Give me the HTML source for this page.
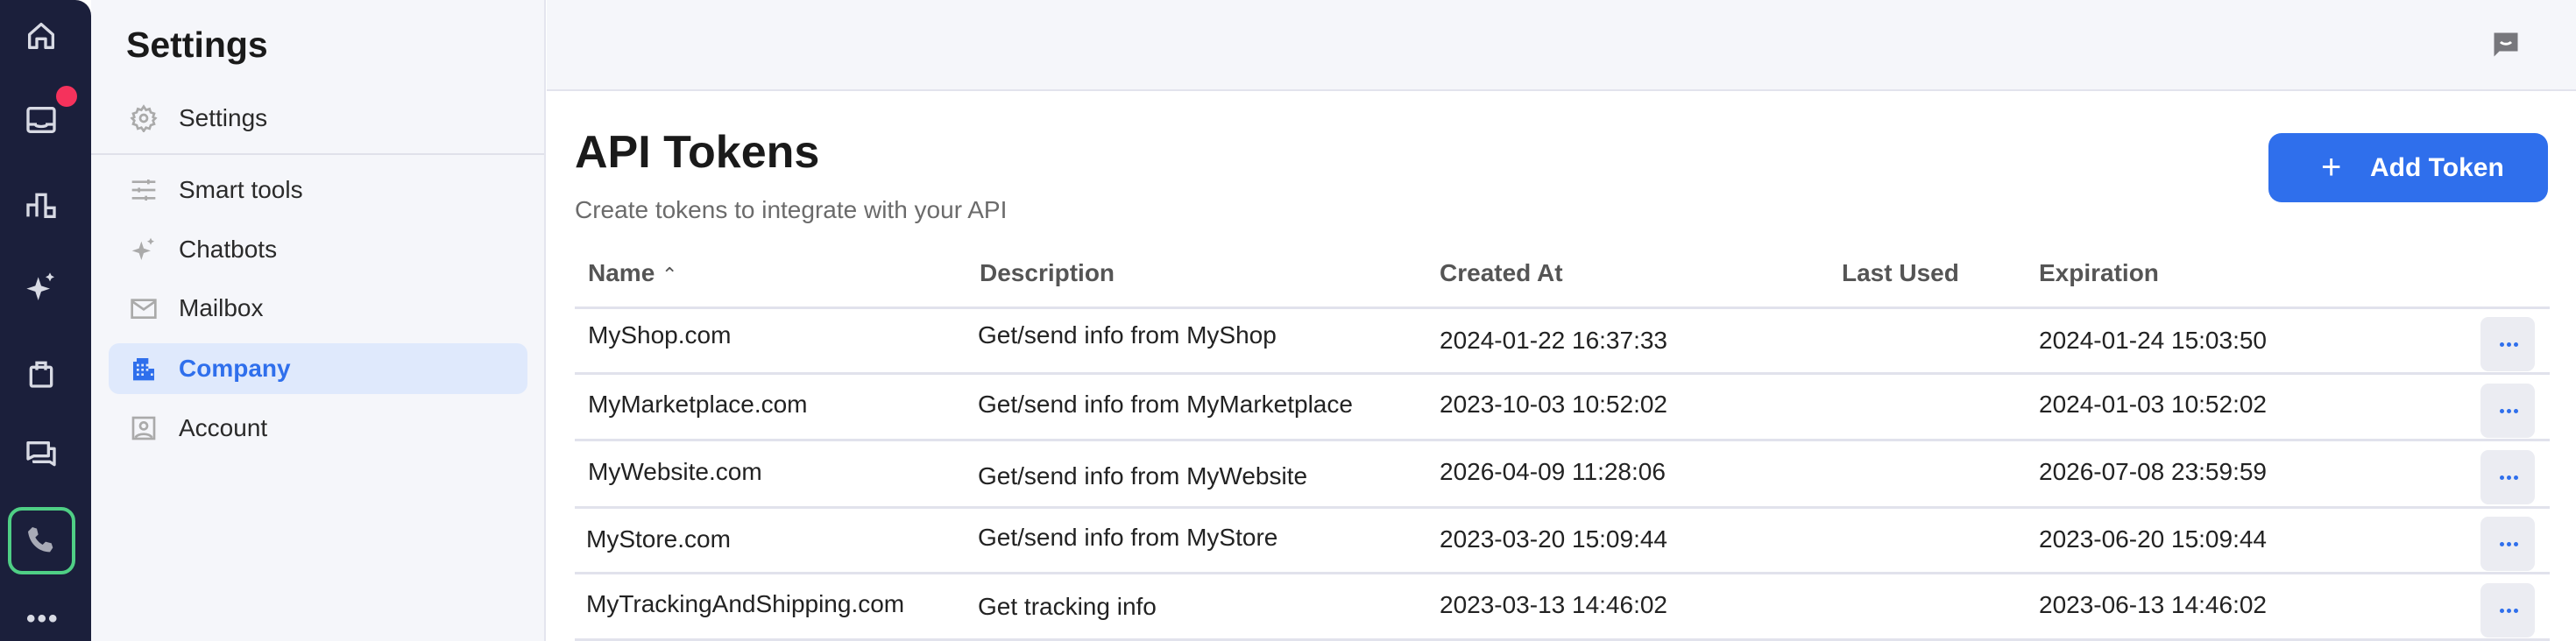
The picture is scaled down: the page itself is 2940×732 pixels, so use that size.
<!DOCTYPE html>
<html><head><meta charset="utf-8"><style>
*{margin:0;padding:0;box-sizing:border-box}
body{width:2940px;height:732px;overflow:hidden;background:#fff;font-family:"Liberation Sans",sans-serif;position:relative}
.side{position:absolute;left:0;top:0;width:104px;height:732px;background:#1b1f3b;border-top-right-radius:18px}
.side svg{position:absolute;left:27px;width:40px;height:40px}
.set{position:absolute;left:104px;top:0;width:519px;height:732px;background:#f5f6fa;border-right:2px solid #e4e5ee}
.set h1{position:absolute;left:40px;top:28px;font-size:41px;font-weight:bold;color:#1a1a1a}
.item{position:absolute;left:0;width:519px;height:58px;font-size:28px;color:#2a2a2a;line-height:58px}
.item span{position:absolute;left:100px}
.item svg{position:absolute;left:44px;top:13px;width:32px;height:32px}
.main{position:absolute;left:624px;top:0;right:0;height:104px;background:#f5f6fa;border-bottom:2px solid #e2e3ed}
h2{position:absolute;left:656px;top:144px;font-size:52px;font-weight:bold;color:#1a1a1a}
.sub{position:absolute;left:656px;top:224px;font-size:28px;color:#6b6b6b}
.btn{position:absolute;left:2589px;top:152px;width:319px;height:79px;background:#2f6fec;border-radius:15px;color:#fff;font-size:30px;font-weight:bold;line-height:79px}
.th{position:absolute;top:296px;font-size:28px;font-weight:bold;color:#555}
.line{position:absolute;left:656px;width:2254px;height:3px;background:#e1e2ec}
.td{position:absolute;font-size:28px;color:#222}
.dots{position:absolute;left:2831px;width:62px;height:62px;background:#ebecf2;border-radius:9px}
.dots::after{content:"";position:absolute;left:22px;top:29px;width:5px;height:5px;border-radius:50%;background:#2f6fec;box-shadow:8px 0 #2f6fec,16px 0 #2f6fec}
</style></head><body>
<div class="side">
<svg style="top:21px" viewBox="0 0 24 24" fill="none" stroke="#d8dae4" stroke-width="2" stroke-linejoin="round"><path d="M4 11l8-7 8 7v9h-5v-6h-6v6H4z"/></svg>
<svg style="top:117px" viewBox="0 0 24 24" fill="none" stroke="#d8dae4" stroke-width="2"><rect x="3" y="4" width="18" height="16" rx="1.5"/><path d="M3 15h5c0 2 8 2 8 0h5"/></svg>
<div style="position:absolute;left:64px;top:98px;width:24px;height:24px;border-radius:50%;background:#f5325c"></div>
<svg style="top:214px" viewBox="0 0 24 24" fill="none" stroke="#d8dae4" stroke-width="2"><path d="M3 20V12h6v8M9 20V5h6v15M15 20v-6h6v6z"/></svg>
<svg style="top:308px" viewBox="0 0 24 24" fill="#d8dae4"><path d="M10 5l2 6 6 2-6 2-2 6-2-6-6-2 6-2zM18 2l1 2 2 1-2 1-1 2-1-2-2-1 2-1z"/></svg>
<svg style="top:406px" viewBox="0 0 24 24" fill="none" stroke="#d8dae4" stroke-width="2"><rect x="5" y="8" width="14" height="13" rx="1"/><path d="M9 10V5h6v5"/></svg>
<svg style="top:499px" viewBox="0 0 24 24" fill="none" stroke="#d8dae4" stroke-width="2" stroke-linejoin="round"><path d="M3 4h14v9H7l-4 2zM7 16v1h11l3 2V8h-4"/></svg>
<div style="position:absolute;left:9px;top:579px;width:77px;height:77px;border:4px solid #4fcf85;border-radius:16px"></div>
<svg style="top:597px" viewBox="0 0 24 24" fill="#a8aab6"><path d="M6 3l3 1 1 4-2 2c1 2 3 4 5 5l2-2 4 1 1 3-2 3C10 20 4 14 3 6z"/></svg>
<div style="position:absolute;left:30px;top:690px;color:#d8dae4;font-size:30px;letter-spacing:2px;font-weight:bold">•••</div>
</div>
<div class="set">
<h1>Settings</h1>
<div class="item" style="top:106px"><svg viewBox="0 0 24 24" fill="none" stroke="#aaa" stroke-width="2"><circle cx="12" cy="12" r="3"/><path d="M12 2l2 3 3-1 1 3 3 1-1 3 2 1-2 2 1 3-3 1-1 3-3-1-2 3-2-3-3 1-1-3-3-1 1-3-2-2 2-1-1-3 3-1 1-3 3 1z"/></svg><span>Settings</span></div>
<div style="position:absolute;left:0;top:175px;width:517px;height:2px;background:#e0e1ea"></div>
<div class="item" style="top:188px"><svg viewBox="0 0 24 24" fill="none" stroke="#aaa" stroke-width="2"><path d="M2 5h20M2 12h20M2 19h20M16 3v4M8 10v4M14 17v4"/></svg><span>Smart tools</span></div>
<div class="item" style="top:256px"><svg viewBox="0 0 24 24" fill="#aaa"><path d="M10 5l2 6 6 2-6 2-2 6-2-6-6-2 6-2zM18 2l1 2 2 1-2 1-1 2-1-2-2-1 2-1z"/></svg><span>Chatbots</span></div>
<div class="item" style="top:323px"><svg viewBox="0 0 24 24" fill="none" stroke="#aaa" stroke-width="2"><rect x="2" y="5" width="20" height="15"/><path d="M2 6l10 7 10-7"/></svg><span>Mailbox</span></div>
<div style="position:absolute;left:20px;top:392px;width:478px;height:58px;background:#dfe9fc;border-radius:12px"></div>
<div class="item" style="top:392px;color:#2f6fec;font-weight:bold"><svg viewBox="0 0 24 24" fill="#2f6fec"><path d="M3 6h3V3h10v9h5v10H3zM6 8v2h2V8zm4 0v2h2V8zm4 0v2h2V8zM6 12v2h2v-2zm4 0v2h2v-2zm4 0v2h2v-2zM6 16v2h2v-2zm4 0v2h2v-2zm8 0v2h2v-2z" fill-rule="evenodd"/></svg><span>Company</span></div>
<div class="item" style="top:460px"><svg viewBox="0 0 24 24" fill="none" stroke="#aaa" stroke-width="2"><rect x="3" y="3" width="18" height="18"/><circle cx="12" cy="10" r="3"/><path d="M5 20c2-4 12-4 14 0"/></svg><span>Account</span></div>
</div>
<div class="main"><svg style="position:absolute;left:2218px;top:33px;width:36px;height:36px" viewBox="0 0 24 24"><path d="M3 3h18v14H7l-4 4z" fill="#77777c"/><path d="M8 10c2 2 6 2 8 0" stroke="#fff" stroke-width="2" fill="none"/></svg></div>
<h2>API Tokens</h2>
<div class="sub">Create tokens to integrate with your API</div>
<div class="btn"><span style="position:absolute;left:60px;font-weight:normal;font-size:40px">+</span><span style="position:absolute;left:116px">Add Token</span></div>
<div class="th" style="left:671px">Name <span style="font-size:22px;font-weight:normal">⌃</span></div>
<div class="th" style="left:1118px">Description</div>
<div class="th" style="left:1643px">Created At</div>
<div class="th" style="left:2102px">Last Used</div>
<div class="th" style="left:2327px">Expiration</div>
<div class="line" style="top:350px"></div><div class="line" style="top:425px"></div><div class="line" style="top:501px"></div><div class="line" style="top:578px"></div><div class="line" style="top:653px"></div><div class="line" style="top:729px"></div>
<div class="td" style="left:671px;top:367px">MyShop.com</div><div class="td" style="left:1116px;top:367px">Get/send info from MyShop</div><div class="td" style="left:1643px;top:373px">2024-01-22 16:37:33</div><div class="td" style="left:2327px;top:373px">2024-01-24 15:03:50</div><div class="dots" style="top:362px"></div>
<div class="td" style="left:671px;top:446px">MyMarketplace.com</div><div class="td" style="left:1116px;top:446px">Get/send info from MyMarketplace</div><div class="td" style="left:1643px;top:446px">2023-10-03 10:52:02</div><div class="td" style="left:2327px;top:446px">2024-01-03 10:52:02</div><div class="dots" style="top:438px"></div>
<div class="td" style="left:671px;top:523px">MyWebsite.com</div><div class="td" style="left:1116px;top:528px">Get/send info from MyWebsite</div><div class="td" style="left:1643px;top:523px">2026-04-09 11:28:06</div><div class="td" style="left:2327px;top:523px">2026-07-08 23:59:59</div><div class="dots" style="top:514px"></div>
<div class="td" style="left:669px;top:600px">MyStore.com</div><div class="td" style="left:1116px;top:598px">Get/send info from MyStore</div><div class="td" style="left:1643px;top:600px">2023-03-20 15:09:44</div><div class="td" style="left:2327px;top:600px">2023-06-20 15:09:44</div><div class="dots" style="top:590px"></div>
<div class="td" style="left:669px;top:674px">MyTrackingAndShipping.com</div><div class="td" style="left:1116px;top:677px">Get tracking info</div><div class="td" style="left:1643px;top:675px">2023-03-13 14:46:02</div><div class="td" style="left:2327px;top:675px">2023-06-13 14:46:02</div><div class="dots" style="top:666px"></div>
</body></html>
